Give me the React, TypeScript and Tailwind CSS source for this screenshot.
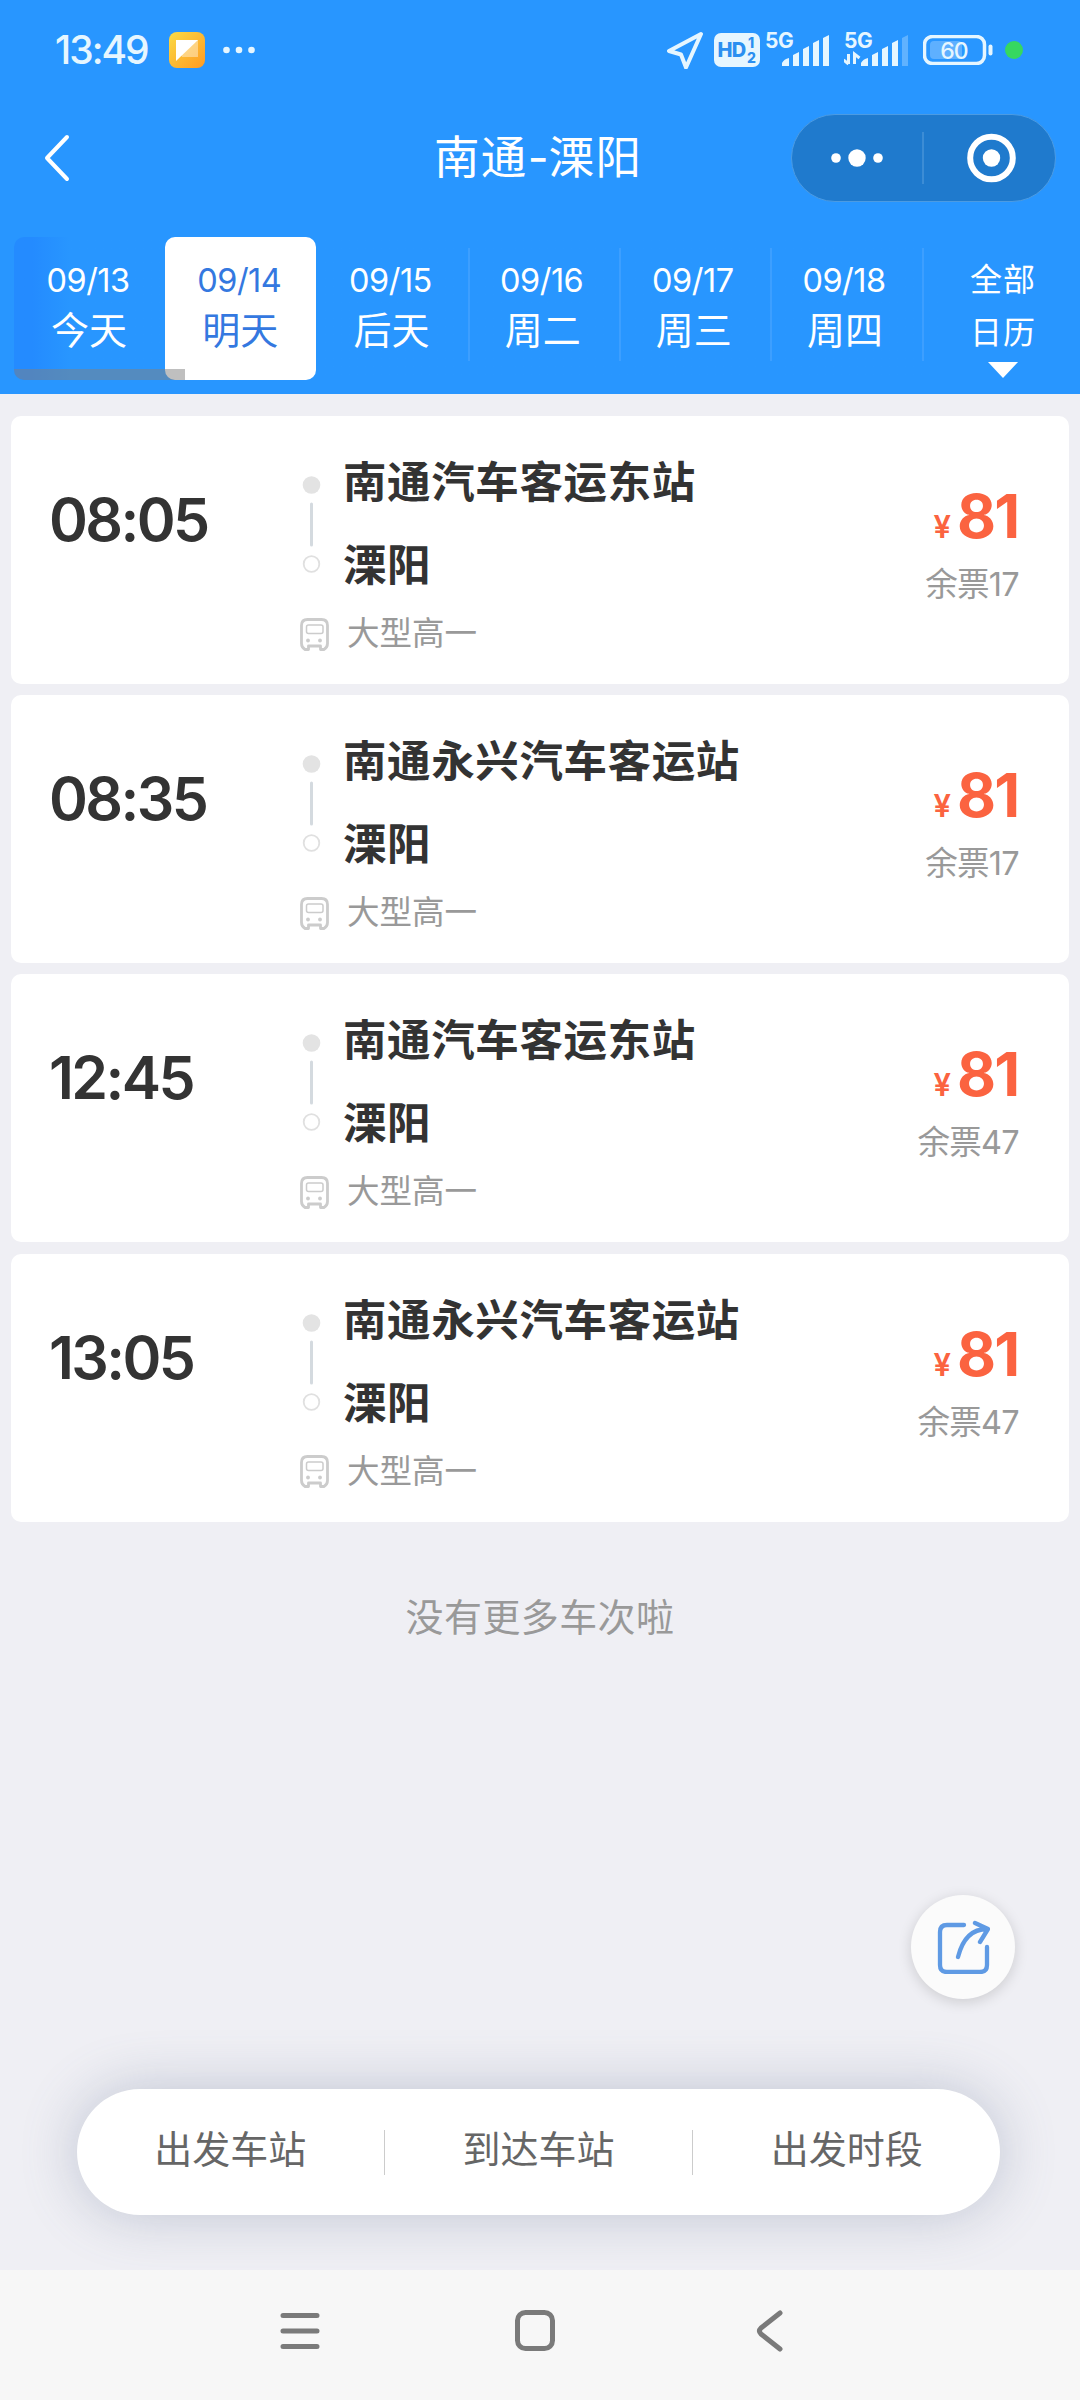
import React from 'react';

const days = [
    { date: '09/13', label: '今天' },
    { date: '09/14', label: '明天', active: true },
    { date: '09/15', label: '后天' },
    { date: '09/16', label: '周二', divider: true },
    { date: '09/17', label: '周三', divider: true },
    { date: '09/18', label: '周四', divider: true },
];

const trips = [
    { time: '08:05', from: '南通汽车客运东站', to: '溧阳', price: 81, left: 17 },
    { time: '08:35', from: '南通永兴汽车客运站', to: '溧阳', price: 81, left: 17 },
    { time: '12:45', from: '南通汽车客运东站', to: '溧阳', price: 81, left: 47 },
    { time: '13:05', from: '南通永兴汽车客运站', to: '溧阳', price: 81, left: 47 },
];

const Signal: React.FC<{ weak?: boolean; data?: boolean }> = ({ weak, data }) => (
    <svg width="66" height="48" viewBox="0 -6 66 48" fill="#e6f6ff">
        <text x="0" y="16" fontSize="21" fontWeight="700" letterSpacing="-0.3">5G</text>
        {data && <path d="M4.500 22v10M4.500 32l-5-4M10.500 32V22l5 4" fill="none" stroke="#e6f6ff" strokeWidth="3" />}
        <path d="M17 34v-3q2-4 7-5v8zM28 34V23l6-3v14zM38 34V17l6-3v20zM48 34V11l6-3v26z" />
        <path d="M58 34V6l6-3v31z" opacity={weak ? 0.3 : 1} />
    </svg>
);

const StatusBar = () => (
    <div className="flex h-[100px] items-center justify-between pl-[55px] pr-[57px] text-[#e6f6ff]">
        <div className="flex items-center">
            <span className="w-[114px] text-[39px] font-medium leading-[48px] tracking-[-2px]">13:49</span>
            <svg width="36" height="36" viewBox="0 0 36 36">
                <defs>
                    <linearGradient id="note" x1="0" y1="0" x2="1" y2="1">
                        <stop offset="0" stopColor="#fadb45" />
                        <stop offset="1" stopColor="#ff9a22" />
                    </linearGradient>
                </defs>
                <rect width="36" height="36" rx="8" fill="url(#note)" />
                <path d="M7 8h22v17H13z" fill="#fff" opacity=".4" />
                <path d="M7 8h22L7 29z" fill="#fff" />
            </svg>
            <svg className="ml-[18px]" width="32" height="8" viewBox="0 0 32 8" fill="#e6f6ff">
                <circle cx="3.5" cy="4" r="3.3" />
                <circle cx="16" cy="4" r="3.3" />
                <circle cx="28.500" cy="4" r="3.3" />
            </svg>
        </div>
        <div className="flex items-center">
            <svg width="38" height="38" viewBox="0 0 38 38" fill="none" stroke="#e6f6ff" strokeWidth="4" strokeLinejoin="round">
                <path d="M35 3L3 20l12 3.500 5 13z" />
            </svg>
            <svg className="ml-[10px]" width="46" height="34" viewBox="0 0 46 34">
                <rect width="46" height="34" rx="7" fill="#e6f6ff" />
                <g fill="#2b8ff0" fontWeight="800">
                    <text x="3.500" y="24" fontSize="20" letterSpacing="-0.8">HD</text>
                    <text x="34" y="15" fontSize="14">1</text>
                    <text x="33" y="30" fontSize="14">2</text>
                </g>
            </svg>
            <div className="ml-[5px] flex gap-[13px]">
                <Signal />
                <Signal weak data />
            </div>
            <svg className="ml-[13px]" width="70" height="30" viewBox="0 0 70 30">
                <rect x="1.5" y="1.5" width="60" height="27" rx="8" fill="none" stroke="#e6f6ff" strokeWidth="3.5" />
                <rect x="7" y="6" width="32" height="18" rx="4" fill="#fff" opacity=".25" />
                <path d="M67.500 11.500v7" stroke="#e6f6ff" strokeWidth="4" strokeLinecap="round" />
                <text x="31" y="23.500" textAnchor="middle" fontSize="23" fontWeight="500" letterSpacing="-1" fill="#e6f6ff">60</text>
            </svg>
            <span className="ml-[12px] size-[18px] rounded-full bg-[#36d860]" />
        </div>
    </div>
);

const TitleBar = () => (
    <div className="flex h-[116px] items-center pl-[43px] pr-[24px]">
        <svg width="28" height="48" viewBox="0 0 28 48" fill="none" stroke="#fff" strokeWidth="4" strokeLinecap="round" strokeLinejoin="round">
            <path d="M24 3L4 24l20 21" />
        </svg>
        <h1 className="ml-[363px] flex items-center whitespace-nowrap text-[45.500px] leading-[60px] tracking-[1.300px] text-white">
            <span>南通</span>
            <span className="w-[21px] text-center tracking-normal">-</span>
            <span>溧阳</span>
        </h1>
        <svg className="ml-auto" width="265" height="88" viewBox="0 0 265 88">
            <rect x=".5" y=".5" width="264" height="87" rx="43.500" fill="#1f7acd" stroke="#4c9be2" />
            <path d="M132 18v52" stroke="#5a9fdd" />
            <g fill="#fff">
                <circle cx="45" cy="44" r="4.800" />
                <circle cx="66" cy="44" r="8.700" />
                <circle cx="87" cy="44" r="4.800" />
                <circle cx="200.500" cy="44" r="8.700" />
            </g>
            <circle cx="200.500" cy="44" r="21.300" fill="none" stroke="#fff" strokeWidth="6" />
        </svg>
    </div>
);

const DateTabs = () => (
    <div className="flex h-[178px] pl-[14px] pt-[21px]">
        <div className="relative flex h-[143px] w-[925px] overflow-hidden rounded-[10px] bg-linear-to-r from-[#248bff] from-2% to-[#2896ff] to-6%">
            {days.map((day) => (
                <div
                    key={day.date}
                    className={`relative flex w-[151.200px] shrink-0 flex-col items-center ${
                        day.active ? 'rounded-[10px] bg-white text-[#3478e0]' : 'text-white'
                    }`}
                >
                    {day.divider && <i className="absolute left-0 top-[11px] h-[113px] w-[2px] bg-[#3d9fff]" />}
                    <span className="-ml-[3px] mt-[28px] text-[32.500px] leading-8 tracking-[-0.500px]">{day.date}</span>
                    <span className="-ml-[1px] mt-[12px] text-[38px] leading-[42px]">{day.label}</span>
                </div>
            ))}
            <i className="absolute left-[908px] top-[11px] h-[113px] w-[2px] bg-[#3d9fff]" />
            <i className="absolute bottom-0 left-0 h-[11px] w-[171px] bg-[#808080]/50" />
        </div>
        <div className="ml-[14px] flex w-[100px] flex-col items-center text-[32px] leading-8 tracking-[1px] text-white">
            <span className="mt-[27px]">全部</span>
            <span className="mt-[21px]">日历</span>
            <svg className="mt-[13px]" width="30" height="16" viewBox="0 0 30 16" fill="#fff">
                <path d="M0 0h30L15 16z" />
            </svg>
        </div>
    </div>
);

const BusIcon = () => (
    <svg width="29" height="33" viewBox="0 0 29 33" fill="none" stroke="#ccc" strokeWidth="2.800" strokeLinejoin="round">
        <path d="M7.500 1.500h14q6 0 6 6v18q0 4-3.500 6h-3.500v-3.500h-12V31.500H5q-3.500-2-3.500-6v-18q0-6 6-6z" />
        <rect x="6.500" y="7" width="16.500" height="8.500" rx="2" strokeWidth="1.500" />
        <circle cx="8" cy="22.500" r="1.900" fill="#ccc" stroke="none" />
        <circle cx="20" cy="22.500" r="1.900" fill="#ccc" stroke="none" />
    </svg>
);

const TripCard: React.FC<{ trip: (typeof trips)[number] }> = ({ trip }) => (
    <li className="flex h-[268px] rounded-[10px] bg-white text-[#333]">
        <div className="w-[289px] pl-[38px] pt-[74px] text-[59px] font-semibold leading-[60px] tracking-[-2.600px]">{trip.time}</div>
        <div className="flex-1">
            <div className="flex">
                <svg className="mt-[58px]" width="43" height="100" viewBox="0 0 43 100">
                    <circle cx="11.500" cy="11" r="8.800" fill="#e3e3e3" />
                    <path d="M11.500 30v41" stroke="#d4dadf" strokeWidth="3" strokeLinecap="round" />
                    <circle cx="11.500" cy="90" r="7.800" fill="none" stroke="#e0e0e0" strokeWidth="1.800" />
                </svg>
                <div className="flex flex-col text-[43.500px] font-bold leading-[44px] tracking-[0.600px]">
                    <span className="mt-[44px]">{trip.from}</span>
                    <span className="mt-[39px]">{trip.to}</span>
                </div>
            </div>
            <div className="mt-[30px] flex items-center text-[32.500px] leading-[34px] text-[#999]">
                <BusIcon />
                <span className="ml-[18px]">大型高一</span>
            </div>
        </div>
        <div className="flex flex-col items-end pr-[51px] pt-[70px]">
            <div className="flex items-baseline font-bold text-[#fb6340]">
                <span className="text-[31px] font-semibold leading-none">¥</span>
                <span className="ml-[6px] text-[60px] leading-[60px] tracking-[-2px]">{trip.price}</span>
            </div>
            <span className="-mr-[1px] mt-[22px] text-[32.500px] leading-[34px] tracking-[-0.700px] text-[#999]">余票{trip.left}</span>
        </div>
    </li>
);

const FilterBar = () => (
    <div className="ml-[77px] flex h-[126px] w-[923px] items-center rounded-full bg-white text-[38px] leading-[50px] text-[#666] shadow-[0_0_56px_rgba(90,105,140,0.320)]">
        <span className="flex-1 pb-[7px] text-center">出发车站</span>
        <i className="h-[45px] w-[1.500px] bg-[#ccc]" />
        <span className="flex-1 pb-[7px] text-center">到达车站</span>
        <i className="h-[45px] w-[1.500px] bg-[#ccc]" />
        <span className="flex-1 pb-[7px] text-center">出发时段</span>
    </div>
);

const ShareButton = () => (
    <button className="ml-[911px] flex size-[104px] items-center justify-center rounded-full bg-[#fbfbfb] shadow-[0_3px_14px_rgba(0,0,0,0.150)]">
        <svg width="54" height="54" viewBox="0 0 54 54" fill="none" stroke="#5f9ae4" strokeWidth="4.300" strokeLinecap="round" strokeLinejoin="round">
            <path d="M28 5H11q-7 0-7 7v33q0 7 7 7h33q7 0 7-7V27" />
            <path d="M22 37Q29 9 51 9M39 3l13 6-8 13" />
        </svg>
    </button>
);

const SystemNav = () => (
    <svg className="block bg-[#f7f7f7]" width="1080" height="130" viewBox="0 0 1080 130" fill="none" stroke="#7a7a7a" strokeWidth="5" strokeLinecap="round" strokeLinejoin="round">
        <path d="M283 45.500h34M283 61h34M283 76.500h34" />
        <rect x="517.500" y="42.500" width="35" height="36" rx="8" />
        <path d="M780 43L761 58q-3 3 0 6l19 15" />
    </svg>
);

export default function App() {
    return (
        <div className="flex h-[2400px] w-[1080px] flex-col overflow-hidden bg-[#efeff4] font-['Inter','Noto_Sans_CJK_SC',sans-serif]">
            <header className="h-[394px] shrink-0 bg-[#2896ff]">
                <StatusBar />
                <TitleBar />
                <DateTabs />
            </header>
            <main className="flex-1">
                <ul className="flex flex-col gap-[11.200px] px-[11px] pt-[22px]">
                    {trips.map((trip) => (
                        <TripCard key={trip.time} trip={trip} />
                    ))}
                </ul>
                <p className="mt-[75px] text-center text-[38px] leading-[40px] tracking-[0.400px] text-[#999]">没有更多车次啦</p>
            </main>
            <div className="mb-[90px]">
                <ShareButton />
            </div>
            <div className="mb-[55px]">
                <FilterBar />
            </div>
            <SystemNav />
        </div>
    );
}
